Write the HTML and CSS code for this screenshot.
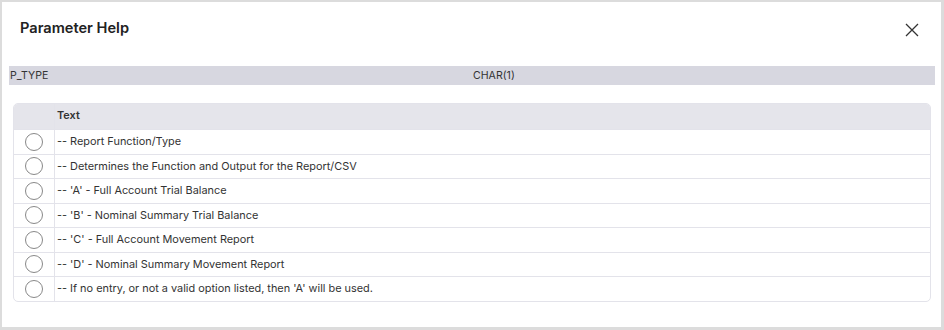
FILE: index.html
```html
<!DOCTYPE html>
<html>
<head>
	<title>Parameter Help</title>
	<link rel="stylesheet" href="styles.css">
</head>
<body>
<div class="dialog">
	<div class="dialog-head">
		<h2 class="dialog-title">Parameter Help</h2>
		<button class="close-btn" aria-label="Close">
			<svg width="14" height="14" viewBox="0 0 14 14"><path d="M1 1 L13 13 M13 1 L1 13" stroke="#333" stroke-width="1.3" fill="none"/></svg>
		</button>
	</div>
	<div class="param-band">
		<span class="param-name">P_TYPE</span>
		<span class="param-type">CHAR(1)</span>
	</div>
	<div class="help-table">
		<div class="help-row head">
			<div class="cell pick"></div>
			<div class="cell text">Text</div>
		</div>
		<div class="help-row">
			<div class="cell pick"><span class="radio"></span></div>
			<div class="cell text">-- Report Function/Type</div>
		</div>
		<div class="help-row">
			<div class="cell pick"><span class="radio"></span></div>
			<div class="cell text">-- Determines the Function and Output for the Report/CSV</div>
		</div>
		<div class="help-row">
			<div class="cell pick"><span class="radio"></span></div>
			<div class="cell text">-- 'A' - Full Account Trial Balance</div>
		</div>
		<div class="help-row">
			<div class="cell pick"><span class="radio"></span></div>
			<div class="cell text">-- 'B' - Nominal Summary Trial Balance</div>
		</div>
		<div class="help-row">
			<div class="cell pick"><span class="radio"></span></div>
			<div class="cell text">-- 'C' - Full Account Movement Report</div>
		</div>
		<div class="help-row">
			<div class="cell pick"><span class="radio"></span></div>
			<div class="cell text">-- 'D' - Nominal Summary Movement Report</div>
		</div>
		<div class="help-row">
			<div class="cell pick"><span class="radio"></span></div>
			<div class="cell text">-- If no entry, or not a valid option listed, then 'A' will be used.</div>
		</div>
	</div>
</div>
</body>
</html>
```

FILE: styles.css
```css
body{
	margin: 0;
	background: #fff;
	font-family: Inter, "Open Sans", sans-serif;
	color: #333;
}

.dialog{
	width: 944px;
	height: 330px;
	box-sizing: border-box;
	border: 2px solid #dcdcdc;
	border-right-width: 3px;
	border-bottom-width: 3px;
	background: #fff;
}

.dialog-head{
	display: flex;
	align-items: center;
	justify-content: space-between;
	height: 52px;
	padding: 0 22px 0 18px;
}

.dialog-title{
	margin: 0;
	font-size: 14.6px;
	font-weight: 600;
	color: #222;
}

.close-btn{
	border: none;
	background: none;
	padding: 0;
	width: 14px;
	height: 14px;
	display: flex;
	margin-top: 4px;
}

.param-band{
	display: flex;
	height: 19px;
	align-items: center;
	margin: 12px 6px 0 7px;
	background: #d7d7e0;
	font-size: 10.6px;
}

.param-name{
	width: 463px;
	padding-left: 1px;
}

.help-table{
	margin: 18px 10px 0 11px;
	border: 1px solid #e3e3ea;
	border-radius: 5px;
	overflow: hidden;
	font-size: 10.9px;
}

.help-row{
	display: flex;
	height: 24.5px;
	border-top: 1px solid #e3e3ea;
	box-sizing: border-box;
}

.help-row:first-child{
	border-top: none;
}

.help-row.head{
	height: 25px;
	background: #e5e5eb;
	font-weight: 600;
}

.help-row.head .cell.text{
	padding-bottom: 3px;
}

.cell{
	display: flex;
	align-items: center;
}

.cell.pick{
	width: 41px;
	justify-content: center;
	border-right: 1px solid #e3e3ea;
	box-sizing: border-box;
}

.cell.text{
	padding-left: 2px;
	padding-bottom: 1px;
}

.radio{
	width: 18px;
	height: 18px;
	border: 1.3px solid #888;
	border-radius: 50%;
	box-sizing: border-box;
}
```
